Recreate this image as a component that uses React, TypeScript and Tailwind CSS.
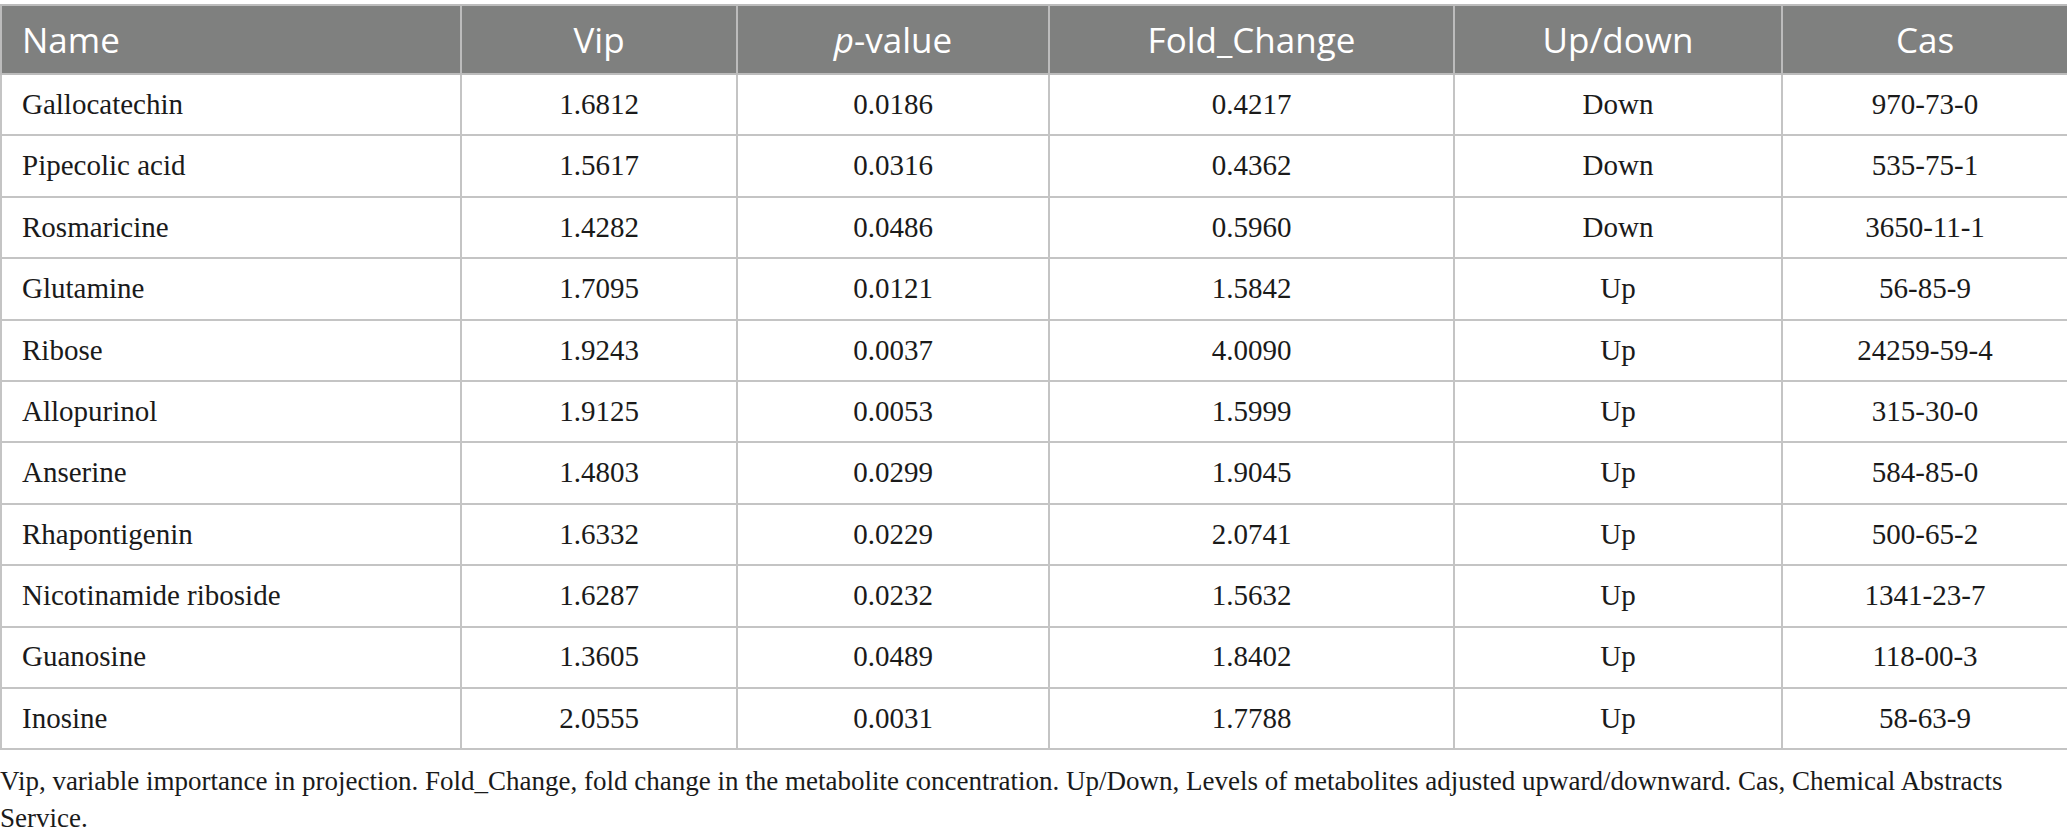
import React from "react";

const rows: [string, string, string, string, string, string][] = [
  ["Gallocatechin", "1.6812", "0.0186", "0.4217", "Down", "970-73-0"],
  ["Pipecolic acid", "1.5617", "0.0316", "0.4362", "Down", "535-75-1"],
  ["Rosmaricine", "1.4282", "0.0486", "0.5960", "Down", "3650-11-1"],
  ["Glutamine", "1.7095", "0.0121", "1.5842", "Up", "56-85-9"],
  ["Ribose", "1.9243", "0.0037", "4.0090", "Up", "24259-59-4"],
  ["Allopurinol", "1.9125", "0.0053", "1.5999", "Up", "315-30-0"],
  ["Anserine", "1.4803", "0.0299", "1.9045", "Up", "584-85-0"],
  ["Rhapontigenin", "1.6332", "0.0229", "2.0741", "Up", "500-65-2"],
  ["Nicotinamide riboside", "1.6287", "0.0232", "1.5632", "Up", "1341-23-7"],
  ["Guanosine", "1.3605", "0.0489", "1.8402", "Up", "118-00-3"],
  ["Inosine", "2.0555", "0.0031", "1.7788", "Up", "58-63-9"],
];

export default function App() {
  return (
    <div className="w-[2067px] h-[838px] bg-white overflow-hidden pt-[4px]">
      <table className="w-[2067px] border-collapse table-fixed">
        <colgroup>
          <col className="w-[460px]" />
          <col className="w-[276px]" />
          <col className="w-[312px]" />
          <col className="w-[405px]" />
          <col className="w-[328px]" />
          <col className="w-[286px]" />
        </colgroup>
        <thead>
          <tr className="h-[69px] bg-[#7f807f] text-white text-[35px] leading-[40px] font-['Open_Sans',sans-serif]">
            <th className="border-2 border-[#bcbcbc] text-left font-normal pl-[20px]">Name</th>
            <th className="border-2 border-[#bcbcbc] text-center font-normal">Vip</th>
            <th className="border-2 border-[#bcbcbc] text-center font-normal">
              <span className="italic">p</span>-value
            </th>
            <th className="border-2 border-[#bcbcbc] text-center font-normal">Fold_Change</th>
            <th className="border-2 border-[#bcbcbc] text-center font-normal">Up/down</th>
            <th className="border-2 border-[#bcbcbc] text-center font-normal">Cas</th>
          </tr>
        </thead>
        <tbody className="text-[29px] text-[#1a1a1a] font-['Liberation_Serif',serif]">
          {rows.map((r) => (
            <tr key={r[0]} className="h-[61.4px]">
              <td className="border-2 border-[#c4c4c4] text-left pl-[20px]">{r[0]}</td>
              <td className="border-2 border-[#c4c4c4] text-center">{r[1]}</td>
              <td className="border-2 border-[#c4c4c4] text-center">{r[2]}</td>
              <td className="border-2 border-[#c4c4c4] text-center">{r[3]}</td>
              <td className="border-2 border-[#c4c4c4] text-center">{r[4]}</td>
              <td className="border-2 border-[#c4c4c4] text-center">{r[5]}</td>
            </tr>
          ))}
        </tbody>
      </table>
      <p className="mt-[13px] text-[27px] leading-[37px] text-[#1a1a1a] font-['Liberation_Serif',serif] pr-[60px]">
        Vip, variable importance in projection. Fold_Change, fold change in the metabolite concentration. Up/Down, Levels of metabolites adjusted upward/downward. Cas, Chemical Abstracts Service.
      </p>
    </div>
  );
}
